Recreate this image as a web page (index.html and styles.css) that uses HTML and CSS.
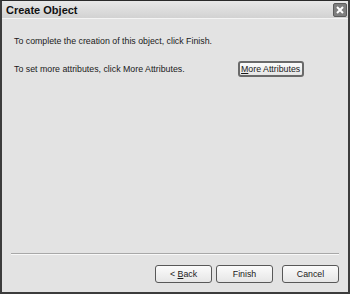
FILE: index.html
```html
<!DOCTYPE html>
<html lang="en">
<head>
    <meta charset="UTF-8">
    <title>Create Object</title>
    <link rel="stylesheet" href="styles.css">
</head>
<body>
    <div class="window">
        <div class="titlebar">
            <span class="title">Create Object</span>
            <span class="close">
                <svg width="8" height="8" viewBox="0 0 8 8"><path d="M1 1 L7 7 M7 1 L1 7" stroke="#fff" stroke-width="2"/></svg>
            </span>
        </div>
        <div class="content">
            <p class="line">To complete the creation of this object, click Finish.</p>
            <div class="row">
                <p class="line">To set more attributes, click More Attributes.</p>
                <button class="btn btn-more" type="button"><u>M</u>ore Attributes</button>
            </div>
        </div>
        <div class="separator"></div>
        <div class="footer">
            <button class="btn" type="button">&lt; <u>B</u>ack</button>
            <button class="btn btn-default" type="button">Finish</button>
            <button class="btn btn-cancel" type="button">Cancel</button>
        </div>
    </div>
</body>
</html>
```

FILE: styles.css
```css
body {
    margin: 0;
    padding: 0;
    background-color: #ffffff;
    font-family: "Liberation Sans", Arial, sans-serif;
}
.window {
    width: 350px;
    height: 294px;
    box-sizing: border-box;
    display: flex;
    flex-direction: column;
    background-color: #e3e3e3;
    border: 2px solid #3c3c3c;
    border-top: 1px solid #2a2a2a;
}
.titlebar {
    height: 17px;
    display: flex;
    align-items: center;
    justify-content: space-between;
    padding: 0 1px 0 4px;
    background: linear-gradient(#e8e8e8, #d2d2d2);
    border-bottom: 1px solid #f4f4f4;
}
.title {
    font-weight: bold;
    font-size: 11px;
    color: #111;
}
.close {
    width: 12px;
    height: 12px;
    display: flex;
    align-items: center;
    justify-content: center;
    background-color: #7e7e7e;
    border: 1px solid #5c5c5c;
    border-radius: 2px;
}
.content {
    flex: 1;
    padding: 17px 0 0 12px;
}
.line {
    margin: 0;
    font-size: 8.8px;
    color: #1a1a1a;
    white-space: nowrap;
}
.row {
    display: flex;
    align-items: center;
    margin-top: 15px;
}
.btn {
    font-family: "Liberation Sans", Arial, sans-serif;
    font-size: 8.8px;
    color: #1a1a1a;
    height: 18px;
    padding: 0;
    white-space: nowrap;
    background: linear-gradient(#fbfbfb, #e6e6e6);
    border: 1px solid #585858;
    border-radius: 3px;
}
.btn-more {
    margin-left: 53px;
    width: 66px;
    height: 16px;
    border: 2px solid #6a6a6a;
}
.separator {
    margin: 0 9px;
    border-top: 1px solid #a8a8a8;
    border-bottom: 1px solid #f8f8f8;
}
.footer {
    display: flex;
    justify-content: flex-end;
    gap: 4px;
    padding: 10px 9px 9px 0;
}
.footer .btn {
    width: 57px;
}
.btn-cancel {
    margin-left: 5px;
}
```
